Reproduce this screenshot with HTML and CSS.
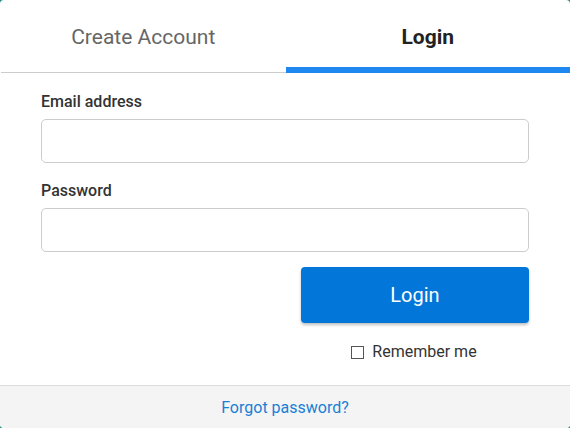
FILE: index.html
```html
<!DOCTYPE html>
<html lang="en">
<head>
<meta charset="utf-8">
<title>Login</title>
<link rel="stylesheet" href="styles.css">
</head>
<body>
<div class="card">
  <div class="tabs">
    <div class="tab">Create Account</div>
    <div class="tab active">Login</div>
  </div>
  <form class="form">
    <label class="label">Email address</label>
    <div class="input"></div>
    <label class="label second">Password</label>
    <div class="input"></div>
    <div class="actions">
      <button type="button" class="btn">Login</button>
      <div class="remember"><span class="box"></span><span>Remember me</span></div>
    </div>
  </form>
  <div class="footer"><a class="link">Forgot password?</a></div>
</div>
</body>
</html>
```
FILE: styles.css
```css
html, body {
  margin: 0;
  padding: 0;
  height: 100%;
}
body {
  background: #2a8c80;
  font-family: Roboto, "Liberation Sans", sans-serif;
}
.card {
  height: 428px;
  background: #fff;
  border-radius: 4px;
  overflow: hidden;
  display: flex;
  flex-direction: column;
}
.tabs {
  display: flex;
  height: 72px;
  border-bottom: 1px solid #cccccc;
  margin-left: 1px;
}
.tab {
  flex: 1;
  display: flex;
  align-items: center;
  justify-content: center;
  font-size: 21px;
  color: #666;
  padding-top: 1px;
  box-sizing: border-box;
}
.tab.active {
  color: #222;
  font-weight: 700;
  border-bottom: 6px solid #1e88f0;
  padding-top: 7px;
  margin-bottom: -1px;
}
.form {
  padding: 20px 41px 0 41px;
  display: flex;
  flex-direction: column;
  margin: 0;
}
.label {
  font-size: 16px;
  line-height: 18px;
  font-weight: 500;
  color: #333;
  margin-bottom: 8px;
}
.label.second {
  margin-top: 19px;
}
.input {
  height: 42px;
  border: 1px solid #cccccc;
  border-radius: 5px;
}
.actions {
  align-self: flex-end;
  width: 228px;
  display: flex;
  flex-direction: column;
  align-items: center;
}
.btn {
  margin-top: 15px;
  width: 100%;
  height: 56px;
  border: 0;
  border-radius: 4px;
  background: #0277d9;
  color: #fff;
  font-family: Roboto, "Liberation Sans", sans-serif;
  font-size: 20px;
  box-shadow: 0 2px 3px rgba(0, 0, 0, 0.25);
}
.remember {
  margin-top: 20px;
  display: flex;
  align-items: center;
  gap: 8px;
  font-size: 16px;
  line-height: 18px;
  color: #333;
  margin-left: -2px;
}
.box {
  width: 11px;
  height: 11px;
  border: 1px solid #555;
}
.footer {
  margin-top: auto;
  height: 42px;
  border-top: 1px solid #dddddd;
  background: #f4f4f4;
  display: flex;
  align-items: center;
  justify-content: center;
}
.link {
  font-size: 16px;
  color: #1a7fd6;
}
```
